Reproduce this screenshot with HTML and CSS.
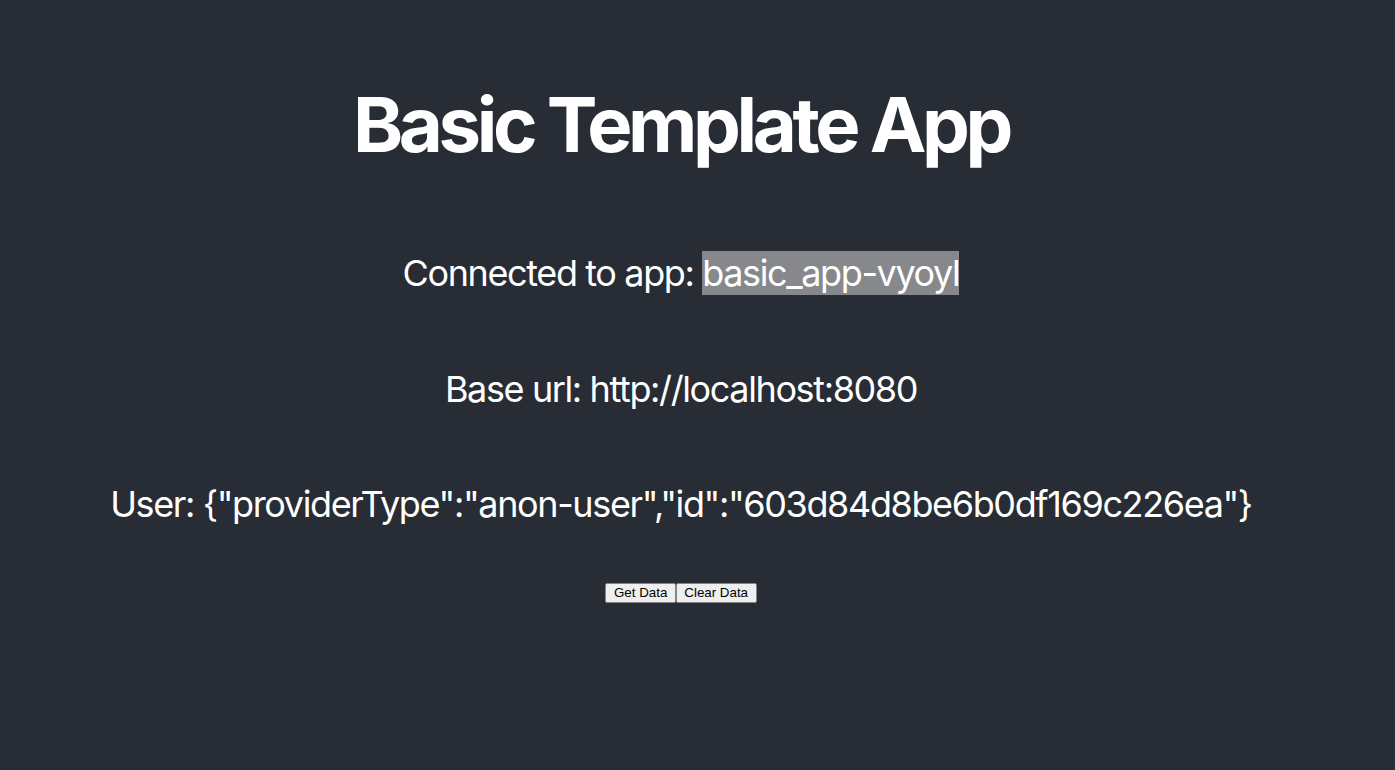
FILE: index.html
```html
<!DOCTYPE html>
<html>
<head>
<meta charset="utf-8">
<link rel="stylesheet" href="styles.css">
</head>
<body>
<div class="app">
  <h1 class="title">Basic Template App</h1>
  <p class="line first">Connected to app: <span class="sel">basic_app-vyoyl</span></p>
  <p class="line">Base url: http://localhost:8080</p>
  <p class="line">User: {"providerType":"anon-user","id":"603d84d8be6b0df169c226ea"}</p>
  <div class="buttons">
    <button class="btn">Get Data</button><button class="btn">Clear Data</button>
  </div>
</div>
</body>
</html>
```
FILE: styles.css
```css
html, body {
  margin: 0;
  padding: 0;
  background: #282c34;
}
.app {
  min-height: 770px;
  box-sizing: border-box;
  display: flex;
  flex-direction: column;
  align-items: center;
  padding: 78px 33px 0 0;
  color: #ffffff;
  font-family: Inter, "Liberation Sans", sans-serif;
}
.title {
  margin: 0;
  font-size: 76px;
  font-weight: 700;
  line-height: 92px;
  letter-spacing: -4.4px;
}
.line {
  margin: 72px 0 0 0;
  font-size: 36px;
  line-height: 43.6px;
  font-weight: 400;
  letter-spacing: -1.38px;
}
.line.first {
  margin-top: 82px;
}
.sel {
  background: #87888b;
}
.buttons {
  margin-top: 56px;
  display: flex;
}
.btn {
  font-family: "Liberation Sans", Arial, sans-serif;
  font-size: 13.33px;
  height: 20px;
  padding: 0 7.5px;
  background: #efefef;
  border: 1px solid #858585;
  border-radius: 2px;
  color: #000;
  line-height: 16px;
}
```
